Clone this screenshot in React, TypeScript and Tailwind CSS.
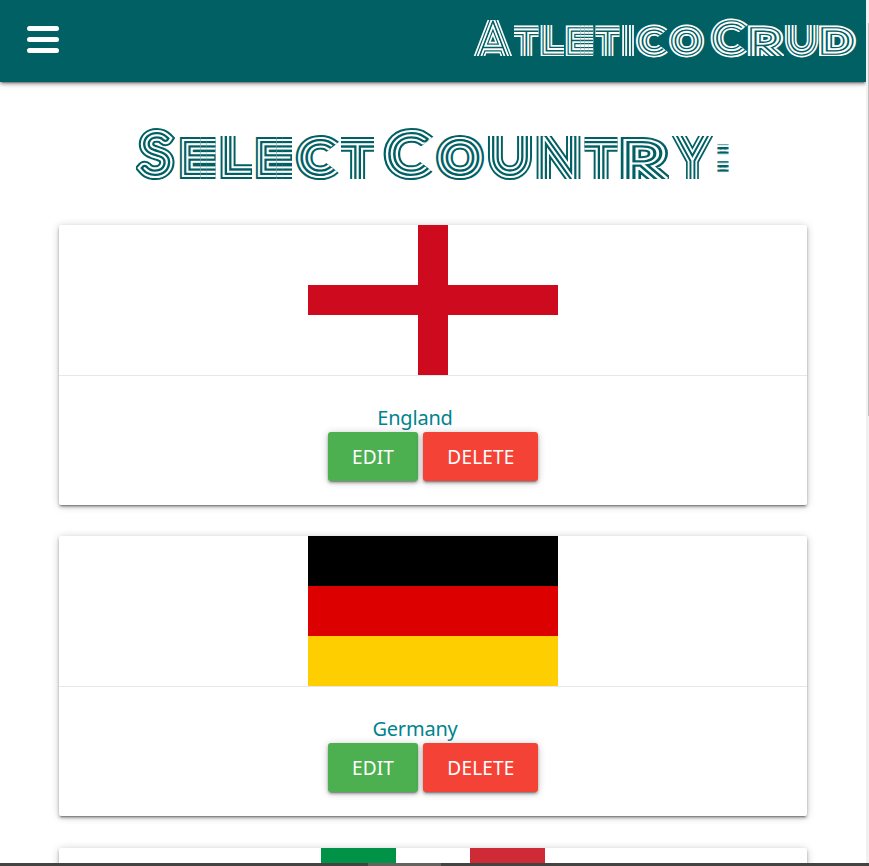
import React from "react";

type Glyph = {
  ch: string;
  x: number;
  y: number;
  size: number;
  sx?: number;
  window: string;
  // Lengthens horizontal bars: `copies` shifted slices, each `step` further right of the stem.
  bars?: { stem: number; step: number; copies: number };
};

const box = (x1: number, y1: number, x2: number, y2: number) => `${x1},${y1} ${x2},${y1} ${x2},${y2} ${x1},${y2}`;
// A box with a wedge opening to the right, for the letter C.
const wedge = (x1: number, y1: number, x2: number, y2: number, cx: number, cy: number) => {
  const d = (x2 - cx) * 0.8;
  return `${x1},${y1} ${x2},${y1} ${x2},${cy - d} ${cx},${cy} ${x2},${cy + d} ${x2},${y2} ${x1},${y2}`;
};

// Each letter is a hairline glyph wrapped in nested outlines of alternating colour.
// The window polygon trims the outlines so that strokes end open.
function StripedText({ id, glyphs, widths, ink, paper, width, height, colon, label }: {
  id: string; glyphs: Glyph[]; widths: number[]; ink: string; paper: string;
  width: number; height: number; colon?: { x: number; y: number }; label: string;
}) {
  const half = widths[0] / 2;
  return (
    <svg width={width} height={height} viewBox={`0 0 ${width} ${height}`} aria-label={label} className="block shrink-0 overflow-visible">
      {glyphs.map((g, i) => {
        const key = `${id}-${i}`;
        const slices = g.bars
          ? Array.from({ length: g.bars.copies }, (_, k) => ({
              dx: k * g.bars!.step,
              from: k === 0 ? -10 : g.bars!.stem + k * g.bars!.step + half,
              to: k === g.bars!.copies - 1 ? width + 10 : g.bars!.stem + (k + 1) * g.bars!.step + half,
            }))
          : [{ dx: 0, from: -10, to: width + 10 }];
        return (
          <g key={key} clipPath={`url(#${key}-w)`} textAnchor="middle" fontWeight={100}
            fontFamily="Lato, Inter, sans-serif" strokeLinejoin="miter" strokeMiterlimit={1.8}>
            <clipPath id={`${key}-w`}><polygon points={g.window} /></clipPath>
            {slices.map((s, k) => (
              <g key={k} clipPath={`url(#${key}-s${k})`}>
                <clipPath id={`${key}-s${k}`}><rect x={s.from} y={-10} width={s.to - s.from} height={height + 20} /></clipPath>
                {widths.map((w, n) => {
                  const color = n % 2 ? paper : ink;
                  return (
                    <g key={n} stroke={color} fill={color} strokeWidth={w}>
                      {k === 0 && n === 0 ? (
                        <text id={`${key}-t`} transform={`translate(${g.x} ${g.y}) scale(${g.sx ?? 1} 1)`} fontSize={g.size}>{g.ch}</text>
                      ) : (
                        <use href={`#${key}-t`} x={s.dx} />
                      )}
                    </g>
                  );
                })}
              </g>
            ))}
          </g>
        );
      })}
      {colon && (
        <>
          <pattern id={`${id}-bars`} width="12" height="4.5" y="22.6" patternUnits="userSpaceOnUse">
            <rect width="12" height="2.2" fill={ink} />
          </pattern>
          <text x={colon.x} y={colon.y} textAnchor="middle" fontFamily="Liberation Sans, sans-serif" fontWeight={700}
            fontSize="46" fill={`url(#${id}-bars)`} stroke={`url(#${id}-bars)`} strokeWidth="4.6">:</text>
        </>
      )}
    </svg>
  );
}

const titleGlyphs: Glyph[] = [
  { ch: "S", x: 21, y: 53.2, size: 53, sx: 1.05, window: box(1, 0, 41, 70) },
  { ch: "E", x: 58.9, y: 52, size: 39, window: box(43, 16, 80.5, 59), bars: { stem: 52.2, step: 6.3, copies: 3 } },
  { ch: "L", x: 100.8, y: 52, size: 60, window: box(84, 16, 117, 59) },
  { ch: "E", x: 134.9, y: 52, size: 39, window: box(119, 16, 157, 59), bars: { stem: 128.2, step: 6.3, copies: 3 } },
  { ch: "C", x: 182.2, y: 53.3, size: 43, sx: 1.14, window: wedge(158, 10, 206, 70, 184.5, 37.5) },
  { ch: "T", x: 222.5, y: 66.2, size: 60, window: box(206, 16, 239, 59) },
  { ch: "C", x: 272.8, y: 53.3, size: 53, sx: 1.12, window: wedge(246, 0, 301, 70, 276, 34.5) },
  { ch: "O", x: 325, y: 53.3, size: 43, sx: 1.14, window: box(299, 10, 351, 70) },
  { ch: "U", x: 375, y: 53.3, size: 59, window: box(352, 16, 399, 70) },
  { ch: "N", x: 423.5, y: 59, size: 60, sx: 0.97, window: box(400, 16, 447, 59) },
  { ch: "T", x: 466, y: 66.2, size: 60, window: box(449.5, 16, 482.5, 59) },
  { ch: "R", x: 508.3, y: 60.5, size: 52, sx: 1.37, window: box(484, 16, 534, 59) },
  { ch: "Y", x: 557.5, y: 62, size: 72, sx: 0.85, window: box(534, 16, 581, 59) },
];

const logoGlyphs: Glyph[] = [
  { ch: "A", x: 23, y: 54, size: 58, sx: 0.93, window: box(2, 12, 43.5, 48) },
  { ch: "T", x: 56.3, y: 54, size: 44, window: box(44, 17, 68.5, 48) },
  { ch: "L", x: 82.2, y: 42.6, size: 46, window: box(70, 17, 94, 48) },
  { ch: "E", x: 106.2, y: 42.6, size: 28, window: box(95, 17, 123.2, 48), bars: { stem: 101.4, step: 3.8, copies: 4 } },
  { ch: "T", x: 137.5, y: 54, size: 44, window: box(125.5, 17, 149.5, 48) },
  { ch: "I", x: 158, y: 56, size: 66, window: box(151, 17, 165, 48) },
  { ch: "C", x: 181.8, y: 44.2, size: 31, sx: 1.15, window: wedge(165, 12, 200, 54, 183.5, 32.5) },
  { ch: "O", x: 216.5, y: 44.2, size: 31.5, sx: 1.12, window: box(198, 12, 236, 54) },
  { ch: "C", x: 258.9, y: 44.3, size: 39, sx: 1.13, window: wedge(239, 8, 279, 54, 261, 30.5) },
  { ch: "R", x: 294.6, y: 51, size: 40, sx: 1.33, window: box(277, 17, 314, 48) },
  { ch: "U", x: 331.5, y: 44.4, size: 44, window: box(314, 17, 349, 54) },
  { ch: "D", x: 366.6, y: 42.6, size: 28, sx: 1.37, window: box(349, 17, 390, 48) },
];

function England() {
  return (
    <div className="flex h-[150px] w-[250px] flex-col">
      <div className="flex h-[60px] justify-center"><div className="w-[30px] bg-[#ce0a1f]" /></div>
      <div className="h-[30px] bg-[#ce0a1f]" />
      <div className="flex h-[60px] justify-center"><div className="w-[30px] bg-[#ce0a1f]" /></div>
    </div>
  );
}
function Germany() {
  return (
    <div className="flex h-[150px] w-[250px] flex-col">
      <div className="flex-1 bg-black" />
      <div className="flex-1 bg-[#dd0000]" />
      <div className="flex-1 bg-[#ffce00]" />
    </div>
  );
}
function Italy() {
  return (
    <div className="flex h-[150px] w-[224px]">
      <div className="flex-1 bg-[#009246]" />
      <div className="flex-1 bg-white" />
      <div className="flex-1 bg-[#ce2b37]" />
    </div>
  );
}

const shadow = "shadow-[0_2px_3px_0_rgba(0,0,0,.3),0_3px_1px_-2px_rgba(0,0,0,.2),0_1px_8px_0_rgba(0,0,0,.2)]";
const button = "flex h-[49px] items-center justify-center rounded-[3px] pt-px text-[19px] tracking-[0.2px] text-white " + shadow;

function CountryCard({ name, flag }: { name?: string; flag: React.ReactNode }) {
  return (
    <section className={"h-[280px] shrink-0 rounded-[2px] bg-white " + shadow}>
      <div className="flex h-[150px] justify-center">{flag}</div>
      {name && (
        <div className="flex flex-col items-center border-t border-[#e7e7e7] pt-[27px]">
          <a className="h-[29px] pr-9 text-[20px] leading-[29px] tracking-[-0.2px] text-[#00838f]">{name}</a>
          <div className="flex gap-[5px]">
            <button className={button + " w-[90px] bg-[#4caf50]"}>EDIT</button>
            <button className={button + " w-[115px] bg-[#f44336] pl-px"}>DELETE</button>
          </div>
        </div>
      )}
    </section>
  );
}

export default function App() {
  return (
    <div className="flex h-[866px] w-[869px] flex-col overflow-hidden bg-white font-['Noto_Sans','Open_Sans',sans-serif]">
      <div className="flex h-[863px]">
        <div className="flex w-[866px] flex-col overflow-hidden">
          <header className={"flex h-[82px] shrink-0 justify-between bg-[#006064] " + shadow}>
            <button aria-label="Menu" className="ml-[27px] mt-[26px] flex h-[27px] w-8 flex-col justify-between">
              <span className="h-[5px] w-full rounded-full bg-white" />
              <span className="h-[5px] w-full rounded-full bg-white" />
              <span className="h-[5px] w-full rounded-full bg-white" />
            </button>
            <div className="mr-[6px] mt-2">
              <StripedText id="brand" label="Atletico Crud" glyphs={logoGlyphs} widths={[10.8, 7.4, 4.8, 1]}
                ink="#ffffff" paper="#006064" width={390} height={56} />
            </div>
          </header>
          <h1 className="ml-[135px] mt-[38px] h-[105px] shrink-0">
            <StripedText id="title" label="Select Country:" glyphs={titleGlyphs} widths={[14.2, 10.2, 6, 1.4]}
              ink="#006064" paper="#ffffff" width={600} height={70} colon={{ x: 588, y: 49.5 }} />
          </h1>
          <main className="ml-[59px] flex w-[748px] flex-col">
            <CountryCard name="England" flag={<England />} />
            <div className="h-[31px] shrink-0" />
            <CountryCard name="Germany" flag={<Germany />} />
            <div className="h-8 shrink-0" />
            <CountryCard flag={<Italy />} />
          </main>
        </div>
        <div className="flex w-[3px] justify-end bg-[#f1f1f1] pt-[23px]">
          <div className="h-[393px] w-px bg-[#c1c1c1]" />
        </div>
      </div>
      <div className="flex h-[3px] bg-[#454341]">
        <div className="ml-[368px] w-[73px] bg-[#67625e]" />
      </div>
    </div>
  );
}
